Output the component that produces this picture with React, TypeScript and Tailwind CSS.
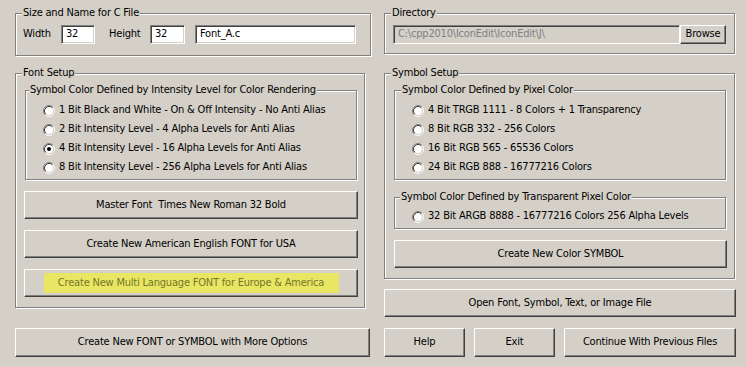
import React from "react";

function GroupBox({
  label,
  className,
  legendClass = "ml-[6px]",
  children,
}: {
  label: string;
  className: string;
  legendClass?: string;
  children?: React.ReactNode;
}) {
  return (
    <fieldset className={`border border-[#808080] shadow-[inset_1px_1px_0_#fff,1px_1px_0_#fff] ${className}`}>
      <legend className={`px-[1px] leading-[14px] bg-[#d4d0c8] ${legendClass}`}>{label}</legend>
      {children}
    </fieldset>
  );
}

function Btn({ className, children }: { className: string; children?: React.ReactNode }) {
  return (
    <div
      className={`flex items-center justify-center bg-[#d4d0c8] border border-t-white border-l-white border-r-[#404040] border-b-[#404040] shadow-[inset_-1px_-1px_0_#808080] whitespace-pre ${className}`}
    >
      {children}
    </div>
  );
}

function Field({ className, children }: { className: string; children?: React.ReactNode }) {
  return (
    <div
      className={`flex items-center h-[19px] pl-[4px] border border-t-[#808080] border-l-[#808080] border-r-white border-b-white shadow-[inset_1px_1px_0_#404040,inset_-1px_-1px_0_#d4d0c8] whitespace-pre ${className}`}
    >
      {children}
    </div>
  );
}

function Radio({ checked }: { checked?: boolean }) {
  return (
    <svg width="12" height="12" viewBox="0 0 12 12" className="shrink-0">
      <circle cx="6" cy="6" r="4.2" fill="#fff" />
      <path d="M2.11 9.89 A5.5 5.5 0 0 1 9.89 2.11" stroke="#808080" fill="none" />
      <path d="M9.89 2.11 A5.5 5.5 0 0 1 2.11 9.89" stroke="#fff" fill="none" />
      <path d="M2.82 9.18 A4.5 4.5 0 0 1 9.18 2.82" stroke="#404040" fill="none" />
      <path d="M9.18 2.82 A4.5 4.5 0 0 1 2.82 9.18" stroke="#d4d0c8" fill="none" />
      {checked && <circle cx="6" cy="6" r="2" fill="#000" />}
    </svg>
  );
}

function RadioRow({ label, checked }: { label: string; checked?: boolean }) {
  return (
    <div className="flex items-center h-[19px] gap-[4px] ml-[17px] whitespace-pre">
      <Radio checked={checked} />
      <span>{label}</span>
    </div>
  );
}

export default function App() {
  return (
    <div className="w-[746px] h-[367px] bg-[#d4d0c8] flex pl-[15px] text-[11px] tracking-[-0.2px] text-black [font-family:'DejaVu_Sans_Condensed','DejaVu_Sans',sans-serif] overflow-hidden">
      {/* Left column */}
      <div className="w-[356px] flex flex-col">
        <GroupBox label="Size and Name for C File" className="mt-[6px] h-[50px] w-[356px]">
          <div className="flex items-center mt-[5px] pl-[7px]">
            <span className="w-[38px]">Width</span>
            <Field className="w-[34px] bg-white">32</Field>
            <span className="ml-[14px] w-[41px]">Height</span>
            <Field className="w-[35px] bg-white">32</Field>
            <Field className="ml-[10px] w-[161px] bg-white">Font_A.c</Field>
          </div>
        </GroupBox>

        <GroupBox label="Font Setup" className="mt-[10px] h-[242px] w-[350px]">
          <GroupBox
            label="Symbol Color Defined by Intensity Level for Color Rendering"
            legendClass="ml-[3px]"
            className="mt-[3px] ml-[9px] w-[332px] h-[97px]"
          >
            <div className="pt-[4px]">
              <RadioRow label="1 Bit Black and White - On & Off Intensity - No Anti Alias" />
              <RadioRow label="2 Bit Intensity Level - 4 Alpha Levels for Anti Alias" />
              <RadioRow label="4 Bit Intensity Level - 16 Alpha Levels for Anti Alias" checked />
              <RadioRow label="8 Bit Intensity Level - 256 Alpha Levels for Anti Alias" />
            </div>
          </GroupBox>
          <Btn className="mt-[11px] ml-[8px] w-[334px] h-[28px]">Master Font  Times New Roman 32 Bold</Btn>
          <Btn className="mt-[11px] ml-[8px] w-[334px] h-[28px]">Create New American English FONT for USA</Btn>
          <Btn className="mt-[11px] ml-[8px] w-[334px] h-[28px]">
            <span className="bg-[#e8e663] text-[#76762c] w-[295px] h-[20px] flex items-center justify-center">
              Create New Multi Language FONT for Europe &amp; America
            </span>
          </Btn>
        </GroupBox>

        <Btn className="mt-[20px] w-[355px] h-[29px]">Create New FONT or SYMBOL with More Options</Btn>
      </div>

      {/* Right column */}
      <div className="ml-[13px] w-[352px] flex flex-col">
        <GroupBox label="Directory" className="mt-[6px] h-[48px] w-[351px]">
          <div className="flex items-center mt-[5px] ml-[8px]">
            <Field className="w-[287px] bg-[#d4d0c8] text-[#808080]">C:\cpp2010\IconEdit\IconEdit\J\</Field>
            <Btn className="w-[46px] h-[19px]">Browse</Btn>
          </div>
        </GroupBox>

        <GroupBox label="Symbol Setup" className="mt-[12px] h-[213px] w-[351px]">
          <GroupBox label="Symbol Color Defined by Pixel Color" className="mt-[3px] ml-[9px] w-[332px] h-[97px]">
            <div className="pt-[4px]">
              <RadioRow label="4 Bit TRGB 1111 - 8 Colors + 1 Transparency" />
              <RadioRow label="8 Bit RGB 332 - 256 Colors" />
              <RadioRow label="16 Bit RGB 565 - 65536 Colors" />
              <RadioRow label="24 Bit RGB 888 - 16777216 Colors" />
            </div>
          </GroupBox>
          <GroupBox
            label="Symbol Color Defined by Transparent Pixel Color"
            legendClass="ml-[5px]"
            className="mt-[10px] ml-[9px] w-[332px] h-[39px]"
          >
            <div className="pt-[3px]">
              <RadioRow label="32 Bit ARGB 8888 - 16777216 Colors 256 Alpha Levels" />
            </div>
          </GroupBox>
          <Btn className="mt-[11px] ml-[9px] w-[333px] h-[28px]">Create New Color SYMBOL</Btn>
        </GroupBox>

        <Btn className="mt-[10px] w-[352px] h-[28px]">Open Font, Symbol, Text, or Image File</Btn>

        <div className="flex mt-[11px] gap-[9px]">
          <Btn className="w-[81px] h-[29px]">Help</Btn>
          <Btn className="w-[81px] h-[29px]">Exit</Btn>
          <Btn className="w-[172px] h-[29px]">Continue With Previous Files</Btn>
        </div>
      </div>
    </div>
  );
}
